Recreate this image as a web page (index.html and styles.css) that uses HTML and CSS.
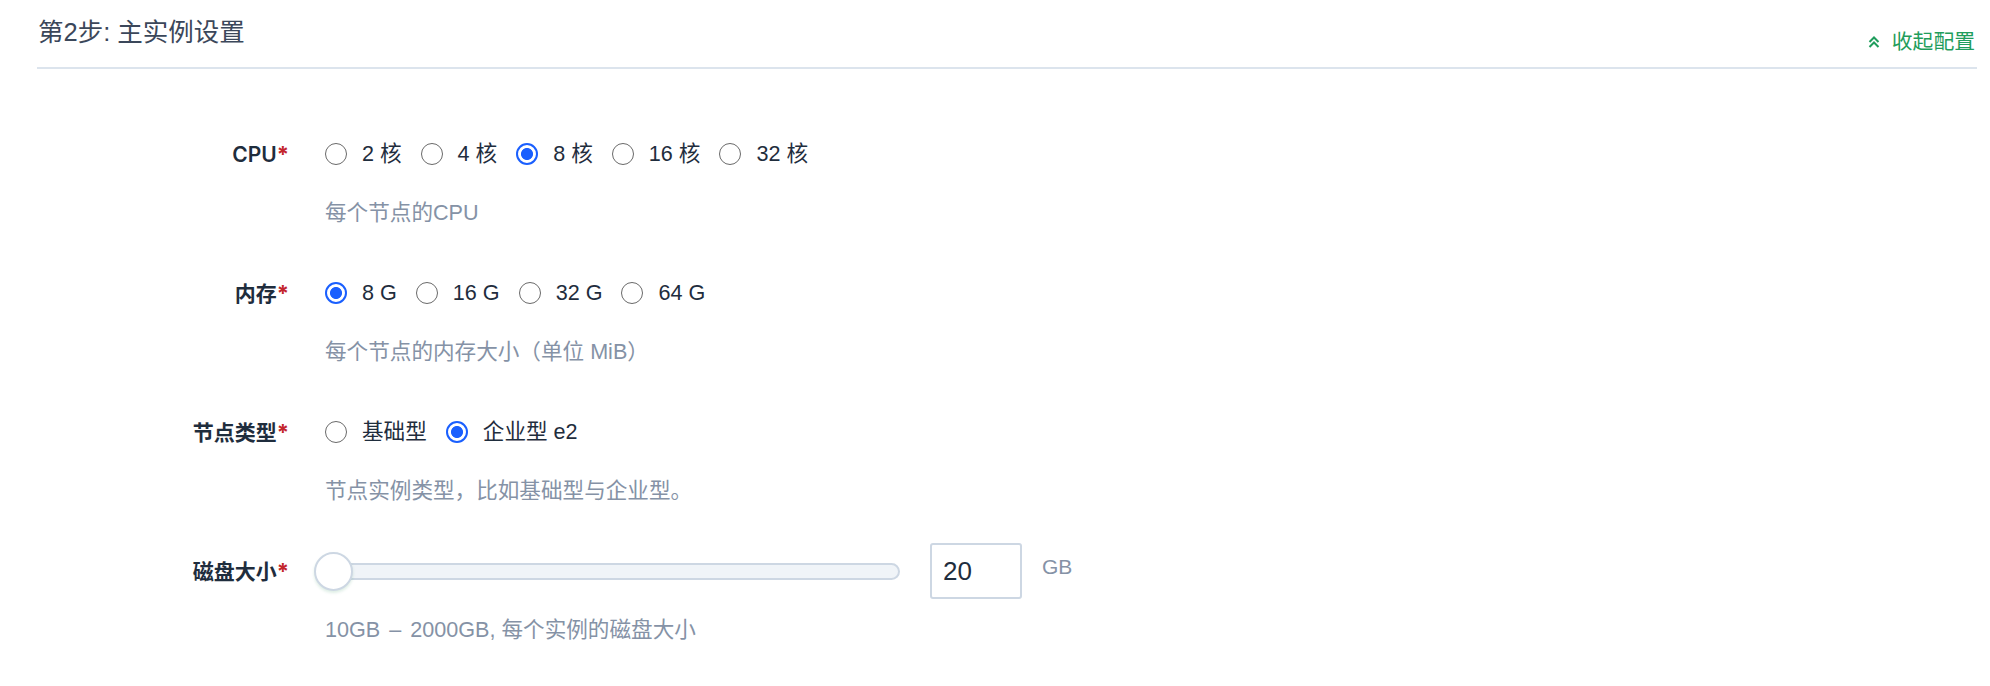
FILE: index.html
```html
<!DOCTYPE html>
<html lang="zh-CN">
<head>
<meta charset="utf-8">
<title>第2步: 主实例设置</title>
<link rel="stylesheet" href="styles.css">
</head>
<body>
<div class="page">
  <header class="step-header">
    <h2 class="step-title">第2步: 主实例设置</h2>
    <a class="collapse" href="#">
      <svg class="chev" width="14" height="14" viewBox="0 0 14 14" aria-hidden="true">
        <polyline points="2.5,7 7,2.5 11.5,7" />
        <polyline points="2.5,12 7,7.5 11.5,12" />
      </svg>
      <span>收起配置</span>
    </a>
  </header>

  <form class="form">
    <div class="item">
      <div class="item-label">CPU<span class="req">*</span></div>
      <div class="item-body">
        <div class="control">
          <label class="radio"><input type="radio" name="cpu"><span>2 核</span></label>
          <label class="radio"><input type="radio" name="cpu"><span>4 核</span></label>
          <label class="radio"><input type="radio" name="cpu" checked><span>8 核</span></label>
          <label class="radio"><input type="radio" name="cpu"><span>16 核</span></label>
          <label class="radio"><input type="radio" name="cpu"><span>32 核</span></label>
        </div>
        <div class="help">每个节点的CPU</div>
      </div>
    </div>

    <div class="item">
      <div class="item-label">内存<span class="req">*</span></div>
      <div class="item-body">
        <div class="control">
          <label class="radio"><input type="radio" name="mem" checked><span>8 G</span></label>
          <label class="radio"><input type="radio" name="mem"><span>16 G</span></label>
          <label class="radio"><input type="radio" name="mem"><span>32 G</span></label>
          <label class="radio"><input type="radio" name="mem"><span>64 G</span></label>
        </div>
        <div class="help">每个节点的内存大小（单位 MiB）</div>
      </div>
    </div>

    <div class="item">
      <div class="item-label">节点类型<span class="req">*</span></div>
      <div class="item-body">
        <div class="control">
          <label class="radio"><input type="radio" name="type"><span>基础型</span></label>
          <label class="radio"><input type="radio" name="type" checked><span>企业型 e2</span></label>
        </div>
        <div class="help">节点实例类型，比如基础型与企业型。</div>
      </div>
    </div>

    <div class="item">
      <div class="item-label">磁盘大小<span class="req">*</span></div>
      <div class="item-body">
        <div class="control">
          <div class="slider"><span class="thumb"></span></div>
          <input class="num" type="text" value="20">
          <span class="unit">GB</span>
        </div>
        <div class="help">10GB <span class="dash">–</span> 2000GB, 每个实例的磁盘大小</div>
      </div>
    </div>
  </form>
</div>
</body>
</html>
```

FILE: styles.css
```css
html, body {
  margin: 0;
  background: #ffffff;
}

body {
  font-family: "Liberation Sans", "Noto Sans CJK SC", sans-serif;
  color: #1f2d3d;
}

.page {
  padding: 0 13px 0 37px;
}

.step-header {
  display: flex;
  justify-content: space-between;
  align-items: flex-start;
  height: 67px;
  border-bottom: 2px solid #dce4ed;
}

.step-title {
  margin: 19px 0 0 1px;
  font-size: 25.5px;
  line-height: 26px;
  font-weight: 400;
  color: #3b475a;
}

.collapse {
  display: flex;
  align-items: center;
  gap: 11px;
  margin: 31px 2px 0 0;
  font-size: 20.8px;
  line-height: 22px;
  color: #1f9d5c;
  text-decoration: none;
}

.chev {
  display: block;
}

.chev polyline {
  fill: none;
  stroke: #1f9d5c;
  stroke-width: 2;
}

.form {
  padding-top: 65px;
}

.item {
  display: flex;
  margin-bottom: 46px;
}

.item-label {
  width: 252px;
  flex: none;
  text-align: right;
  font-family: "Inter", "Noto Sans CJK SC", sans-serif;
  font-size: 21px;
  line-height: 40px;
  font-weight: 600;
  color: #1f2d3d;
}

.req {
  color: #c3262c;
  font-weight: 700;
  font-size: 22px;
}

.item-body {
  margin-left: 36px;
}

.control {
  display: flex;
  align-items: center;
  height: 40px;
}

.radio {
  display: flex;
  align-items: center;
  margin-right: 19px;
  font-size: 21.6px;
  line-height: 28px;
  color: #1f2d3d;
}

.radio input {
  appearance: none;
  -webkit-appearance: none;
  width: 22px;
  height: 22px;
  margin: 0 15px 0 0;
  box-sizing: border-box;
  border: 1.6px solid #6a6a6a;
  border-radius: 50%;
  background: #fff;
}

.radio input:checked {
  border: 2px solid #1a5ffe;
  background: radial-gradient(circle, #1a5ffe 0 5.6px, #ffffff 6.4px);
}

.help {
  margin-top: 25px;
  font-size: 21.6px;
  line-height: 28px;
  color: #8592a6;
}

.dash {
  margin: 0 3px;
}

.slider {
  position: relative;
  width: 575px;
  height: 17px;
  box-sizing: border-box;
  background: #f0f4f8;
  border: 2px solid #cdd7e3;
  border-radius: 9px;
}

.thumb {
  position: absolute;
  left: -13px;
  top: 50%;
  width: 39px;
  height: 39px;
  margin-top: -19.5px;
  box-sizing: border-box;
  border-radius: 50%;
  background: #ffffff;
  border: 2px solid #cdd7e3;
  box-shadow: 0 2px 3px rgba(70, 160, 110, 0.18);
}

.num {
  width: 92px;
  height: 56px;
  margin-left: 30px;
  padding: 0 11px;
  box-sizing: border-box;
  border: 2px solid #cdd7e3;
  border-radius: 3px;
  font-family: "Liberation Sans", sans-serif;
  font-size: 26px;
  color: #1f2d3d;
  outline: none;
}

.unit {
  margin: -8px 0 0 20px;
  font-size: 21px;
  color: #8592a6;
}
```
